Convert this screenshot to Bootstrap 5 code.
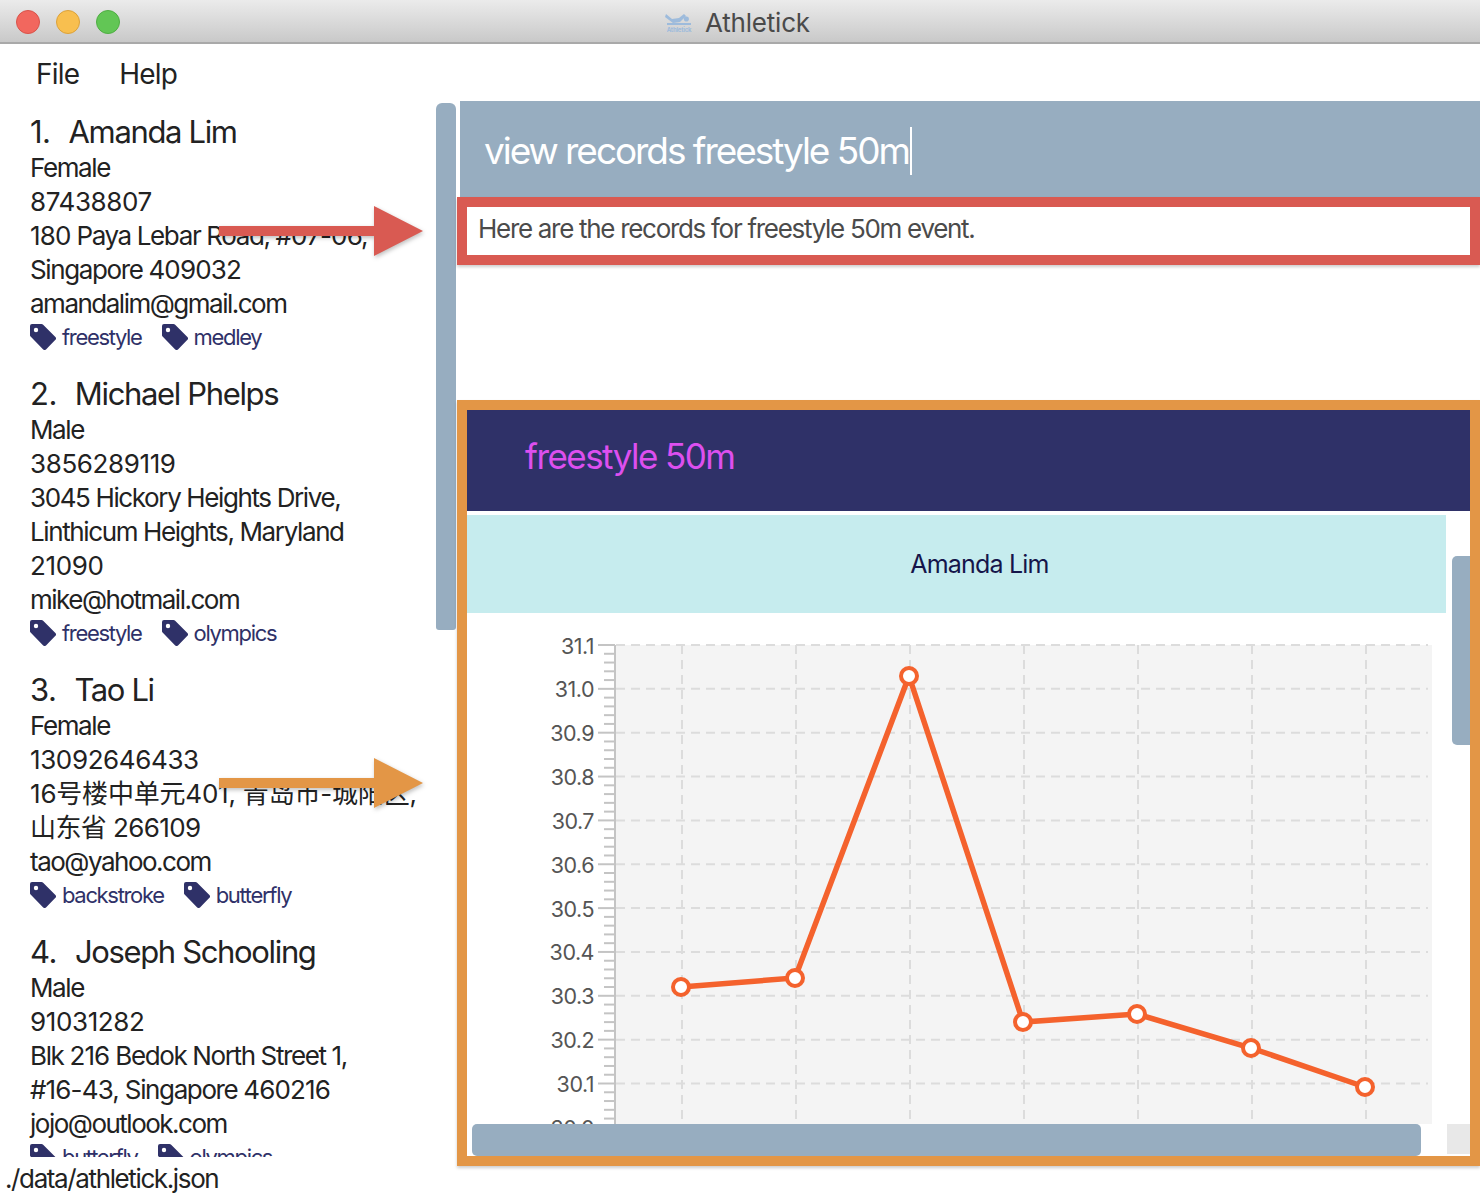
<!DOCTYPE html>
<html lang="en">
<head>
<meta charset="UTF-8">
<title>Athletick</title>
<link rel="stylesheet" href="https://cdn.jsdelivr.net/npm/bootstrap@5.3.0/dist/css/bootstrap.min.css">
<style>
body { margin: 0; background: #fff; font-family: Inter, "Noto Sans CJK SC", sans-serif; color: #222; }
.app-window { width: 1480px; height: 1200px; overflow: hidden; position: relative; }
.title-bar { height: 44px; background: linear-gradient(#ebebeb, #c9c9c9); border-bottom: 2px solid #a9a9a9; position: relative; }
.light { width: 24px; height: 24px; border-radius: 50%; border: 1px solid; }
.light-red { background: #f2675e; border-color: #d9534a; }
.light-yellow { background: #f8bf4f; border-color: #dca23a; }
.light-green { background: #62c655; border-color: #4fae43; }
.lights { padding: 10px 0 0 16px; gap: 16px; }
.title-text { position: absolute; left: 0; right: 0; top: 0; height: 44px; gap: 12px; font-size: 26px; color: #4a4a4a; letter-spacing: -.2px; padding-right: 5px; }
.menu-row { height: 57px; padding: 2px 0 0 36px; gap: 40px; font-size: 28px; letter-spacing: -.8px; }
.left-col { width: 436px; }
.people { height: 1056px; overflow: hidden; padding: 13px 0 0 30px; }
.person { margin-bottom: 21px; }
.person-name { font-size: 31px; line-height: 36px; letter-spacing: -1.35px; margin-bottom: 1px; }
.person-num { margin-right: 18px; letter-spacing: -.5px; }
.person-line { font-size: 26px; line-height: 34px; letter-spacing: -1.38px; white-space: nowrap; }
.person-line-cjk { letter-spacing: -.2px; }
.person-line-cjk2 { letter-spacing: -.6px; }
.person-mail { letter-spacing: -1.5px; }
.num-run { letter-spacing: -.38px; }
.addr-num { letter-spacing: -.85px; }
.person-tags { height: 34px; padding-bottom: 2px; gap: 20px; font-size: 22px; letter-spacing: -1.33px; color: #2f3168; }
.person-tag { gap: 6px; }
.status-text { font-size: 26px; letter-spacing: -1.38px; padding-left: 5px; line-height: 44px; }
.list-thumb { width: 20px; height: 527px; margin-top: 2px; background: #97adc0; border-radius: 6px 6px 3px 3px; flex: none; }
.right-col { width: 1024px; }
.command-box { height: 96px; margin-left: 4px; background: #97adc0; color: #fff; padding: 4px 0 0 24px; font-size: 37px; letter-spacing: -2.05px; }
.caret-line { display: inline-block; width: 2px; height: 48px; background: #fff; margin-left: 1px; }
.result-box { height: 68px; margin-left: 1px; border: 10px solid #d95a52; padding: 0 0 6px 11px; font-size: 26px; letter-spacing: -1.3px; color: #4b4b4b; box-shadow: 0 2px 3px rgba(0,0,0,.2); }
.gap-area { height: 135px; }
.record-box { height: 766px; margin-left: 1px; border: 10px solid #e39646; box-shadow: 0 2px 3px rgba(0,0,0,.2); }
.event-head { height: 101px; background: #2f3168; color: #dd4fef; padding: 0 0 8px 58px; font-size: 35px; letter-spacing: -1.55px; }
.chart-scroll { position: relative; overflow: hidden; height: 645px; padding-top: 4px; }
.athlete-band { width: 979px; height: 98px; background: #c6ecee; color: #15154a; padding: 2px 0 0 46px; font-size: 25px; letter-spacing: -.8px; }
.chart-svg { display: block; }
.chart-svg text { font-family: Inter, sans-serif; font-size: 21.5px; letter-spacing: -.5px; fill: #555; text-anchor: end; }
.v-thumb { position: absolute; right: 0; top: 45px; width: 18px; height: 189px; background: #97adc0; border-radius: 5px 0 0 5px; }
.h-bar { height: 32px; }
.h-thumb { width: 949px; margin-left: 5px; height: 32px; background: #97adc0; border-radius: 5px; }
.h-corner { width: 23px; height: 30px; background: #e8e8e8; margin-left: auto; }
.arrow-over { position: absolute; left: 219px; width: 206px; height: 52px; filter: drop-shadow(1px 2px 2px rgba(0,0,0,.25)); }
.arrow-red { top: 205px; }
.arrow-orange { top: 757px; }
</style>
</head>
<body>
<svg width="0" height="0" class="d-block">
  <symbol id="tag-icon" viewBox="0 0 26 26">
    <path fill="#2f3168" fill-rule="evenodd" d="M2 0H11.5a2 2 0 0 1 1.4.6L25.4 13a2 2 0 0 1 0 2.8L16 25.4a2 2 0 0 1-2.8 0L.6 12.6A2 2 0 0 1 0 11.2V2a2 2 0 0 1 2-2zM6 3.8a2.2 2.2 0 1 0 0 4.4a2.2 2.2 0 0 0 0-4.4z"/>
  </symbol>
</svg>
<div class="app-window">
  <div class="title-bar">
    <div class="lights d-flex">
      <div class="light light-red"></div>
      <div class="light light-yellow"></div>
      <div class="light light-green"></div>
    </div>
    <div class="title-text d-flex align-items-center justify-content-center">
      <svg width="28" height="22" viewBox="0 0 28 22">
        <path fill="#9dbbdc" d="M1 3l6 5 7-1 5-4 2 2-6 6-7 1-8-6zM19 7a2.6 2.6 0 1 0 5 1a2.6 2.6 0 0 0-5-1zM2 12h24v2H2z"/>
        <text x="14" y="20.5" text-anchor="middle" font-size="6" font-weight="700" fill="#9dbbdc">Athletick</text>
      </svg>
      <span>Athletick</span>
    </div>
  </div>
  <div class="menu-row d-flex align-items-center"><span>File</span><span>Help</span></div>
  <div class="d-flex">
    <div class="left-col">
      <div class="people">
        <div class="person">
          <div class="person-name"><span class="person-num">1.</span>Amanda Lim</div>
          <div class="person-line">Female</div>
          <div class="person-line num-run">87438807</div>
          <div class="person-line"><span class="addr-num">180</span> Paya Lebar Road, <span class="addr-num">#07-06,</span></div>
          <div class="person-line">Singapore <span class="addr-num">409032</span></div>
          <div class="person-line person-mail">amandalim@gmail.com</div>
          <div class="person-tags d-flex align-items-center">
            <div class="person-tag d-flex align-items-center"><svg width="26" height="26"><use href="#tag-icon"/></svg>freestyle</div>
            <div class="person-tag d-flex align-items-center"><svg width="26" height="26"><use href="#tag-icon"/></svg>medley</div>
          </div>
        </div>
        <div class="person">
          <div class="person-name"><span class="person-num">2.</span>Michael Phelps</div>
          <div class="person-line">Male</div>
          <div class="person-line num-run">3856289119</div>
          <div class="person-line">3045 Hickory Heights Drive,</div>
          <div class="person-line">Linthicum Heights, Maryland</div>
          <div class="person-line num-run">21090</div>
          <div class="person-line person-mail">mike@hotmail.com</div>
          <div class="person-tags d-flex align-items-center">
            <div class="person-tag d-flex align-items-center"><svg width="26" height="26"><use href="#tag-icon"/></svg>freestyle</div>
            <div class="person-tag d-flex align-items-center"><svg width="26" height="26"><use href="#tag-icon"/></svg>olympics</div>
          </div>
        </div>
        <div class="person">
          <div class="person-name"><span class="person-num">3.</span>Tao Li</div>
          <div class="person-line">Female</div>
          <div class="person-line num-run">13092646433</div>
          <div class="person-line person-line-cjk">16号楼中单元401, 青岛市-城阳区,</div>
          <div class="person-line person-line-cjk2">山东省 266109</div>
          <div class="person-line person-mail">tao@yahoo.com</div>
          <div class="person-tags d-flex align-items-center">
            <div class="person-tag d-flex align-items-center"><svg width="26" height="26"><use href="#tag-icon"/></svg>backstroke</div>
            <div class="person-tag d-flex align-items-center"><svg width="26" height="26"><use href="#tag-icon"/></svg>butterfly</div>
          </div>
        </div>
        <div class="person">
          <div class="person-name"><span class="person-num">4.</span>Joseph Schooling</div>
          <div class="person-line">Male</div>
          <div class="person-line num-run">91031282</div>
          <div class="person-line">Blk <span class="addr-num">216</span> Bedok North Street 1,</div>
          <div class="person-line"><span class="addr-num">#16-43,</span> Singapore <span class="addr-num">460216</span></div>
          <div class="person-line person-mail">jojo@outlook.com</div>
          <div class="person-tags d-flex align-items-center">
            <div class="person-tag d-flex align-items-center"><svg width="26" height="26"><use href="#tag-icon"/></svg>butterfly</div>
            <div class="person-tag d-flex align-items-center"><svg width="26" height="26"><use href="#tag-icon"/></svg>olympics</div>
          </div>
        </div>
      </div>
      <div class="status-text">./data/athletick.json</div>
    </div>
    <div class="list-thumb"></div>
    <div class="right-col">
      <div class="command-box d-flex align-items-center">view records freestyle 50m<span class="caret-line"></span></div>
      <div class="result-box d-flex align-items-center">Here are the records for freestyle 50m event.</div>
      <div class="gap-area"></div>
      <div class="record-box">
        <div class="event-head d-flex align-items-center">freestyle 50m</div>
        <div class="chart-scroll">
          <div class="athlete-band d-flex align-items-center justify-content-center">Amanda Lim</div>
          <svg class="chart-svg" id="chart" width="1002" height="511" viewBox="467 613 1002 511"></svg>
          <div class="h-bar d-flex">
            <div class="h-thumb"></div>
            <div class="h-corner"></div>
          </div>
          <div class="v-thumb"></div>
        </div>
      </div>
    </div>
  </div>
  <svg class="arrow-over arrow-red" viewBox="0 0 206 52"><path fill="#d95a52" d="M0 21H155V1L204 26L155 51V31H0z"/></svg>
  <svg class="arrow-over arrow-orange" viewBox="0 0 206 52"><path fill="#e39646" d="M0 21H155V1L204 26L155 51V31H0z"/></svg>
</div>
<script>
// Build the line chart in page coordinates
const chart = document.getElementById('chart');
const points = [[681, 987], [795, 978], [909, 676], [1023, 1022], [1137, 1014], [1251, 1048], [1365, 1087]];
const gridX = [682, 796, 910, 1024, 1138, 1252, 1366];
const plotTop = 645;
const step = 43.85;
let html = `<rect x="615" y="${plotTop}" width="817" height="480" fill="#f4f4f4"/>`;

for (let i = 0; i <= 11; i++) {
    const y = plotTop + i * step;
    html += `<line x1="616" x2="1428" y1="${y}" y2="${y}" stroke="#dcdcdc" stroke-width="2" stroke-dasharray="9 6"/>`;
    html += `<line x1="598" x2="615" y1="${y}" y2="${y}" stroke="#c4c4c4" stroke-width="2"/>`;
    html += `<text x="594" y="${y + 8.5}">${(31.1 - i * 0.1).toFixed(1)}</text>`;
    for (let j = 1; j < 5 && i < 11; j++) {
        const minor = y + j * step / 5;
        html += `<line x1="604" x2="615" y1="${minor}" y2="${minor}" stroke="#c4c4c4" stroke-width="2"/>`;
    }
}
gridX.forEach(x => {
    html += `<line x1="${x}" x2="${x}" y1="${plotTop}" y2="1124" stroke="#dcdcdc" stroke-width="2" stroke-dasharray="9 6"/>`;
});
html += `<line x1="615" x2="615" y1="${plotTop}" y2="1124" stroke="#c4c4c4" stroke-width="2"/>`;
html += `<polyline fill="none" stroke="#f4622d" stroke-width="5.5" points="${points.join(' ')}"/>`;
points.forEach(([x, y]) => {
    html += `<circle cx="${x}" cy="${y}" r="8" fill="#fff" stroke="#f4622d" stroke-width="4"/>`;
});
chart.innerHTML = html;
</script>
<script src="https://cdn.jsdelivr.net/npm/bootstrap@5.3.0/dist/js/bootstrap.bundle.min.js"></script>
</body>
</html>
